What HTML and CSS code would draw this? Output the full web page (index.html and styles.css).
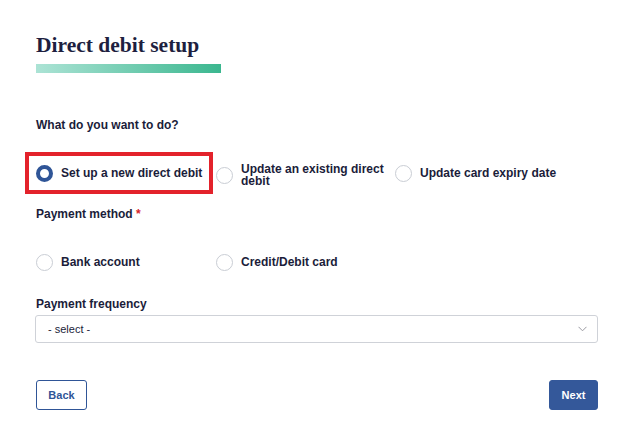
FILE: index.html
```html
<!DOCTYPE html>
<html lang="en">
<head>
<meta charset="utf-8">
<title>Direct debit setup</title>
<link rel="stylesheet" href="styles.css">
</head>
<body>
<main class="page">
  <h1 class="title">Direct debit setup</h1>
  <div class="title-bar"></div>

  <p class="label label-question">What do you want to do?</p>
  <div class="options options-action">
    <label class="option option-highlight">
      <span class="radio radio-checked"></span>
      <span class="option-text">Set up a new direct debit</span>
    </label>
    <label class="option">
      <span class="radio"></span>
      <span class="option-text">Update an existing direct debit</span>
    </label>
    <label class="option">
      <span class="radio"></span>
      <span class="option-text">Update card expiry date</span>
    </label>
  </div>

  <p class="label label-method">Payment method <span class="required">*</span></p>
  <div class="options options-method">
    <label class="option">
      <span class="radio"></span>
      <span class="option-text">Bank account</span>
    </label>
    <label class="option">
      <span class="radio"></span>
      <span class="option-text">Credit/Debit card</span>
    </label>
  </div>

  <p class="label label-frequency">Payment frequency</p>
  <div class="select">
    <span class="select-value">- select -</span>
    <svg class="chevron" width="9" height="6" viewBox="0 0 9 6"><path d="M0.5 0.8 L4.5 4.8 L8.5 0.8" fill="none" stroke="#9a9aa2" stroke-width="1"/></svg>
  </div>

  <div class="actions">
    <button class="btn btn-back">Back</button>
    <button class="btn btn-next">Next</button>
  </div>
</main>
</body>
</html>
```
FILE: styles.css
```css
* { box-sizing: border-box; }

html, body {
  margin: 0;
  padding: 0;
  background: #ffffff;
}

body {
  font-family: "Liberation Sans", Arial, sans-serif;
  color: #1b1d3a;
}

.page {
  width: 631px;
  padding: 33px 33px 0 36px;
}

.title {
  margin: 0;
  font-family: "Liberation Serif", Georgia, serif;
  font-weight: 700;
  font-size: 21.5px;
  line-height: 25px;
  color: #1e1f40;
}

.title-bar {
  margin-top: 6px;
  width: 185px;
  height: 9px;
  background: linear-gradient(90deg, #ace3d5 0%, #3bb78f 100%);
}

.label {
  margin: 0;
  font-size: 12px;
  font-weight: 700;
  line-height: 16px;
  color: #1b1d3a;
}

.label-question { margin-top: 44px; }
.label-method { margin-top: 19px; }
.label-frequency { margin-top: 24px; }

.required { color: #d8232a; }

.options {
  display: grid;
  grid-template-columns: 180px 179px 1fr;
  align-items: start;
  justify-items: start;
}

.options-action { margin-top: 30px; }
.options-method { margin-top: 30px; }

.option {
  display: flex;
  align-items: center;
  gap: 8px;
  min-height: 20px;
  padding-right: 4px;
  cursor: pointer;
}

.option-text {
  font-size: 12px;
  font-weight: 700;
  line-height: 12px;
  color: #1b1d3a;
}

.option-highlight {
  padding-right: 0;
  outline: 4px solid #e3222b;
  outline-offset: 7px;
}

.radio {
  flex: 0 0 auto;
  width: 17px;
  height: 17px;
  border-radius: 50%;
  border: 1px solid #c9cdd4;
  background: #fff;
}

.radio-checked {
  border: 4px solid #2f5597;
}

.select {
  margin-top: 3px;
  margin-left: -1px;
  width: 563px;
  height: 28px;
  border: 1px solid #cfd2d8;
  border-radius: 3px;
  display: flex;
  align-items: center;
  justify-content: space-between;
  padding: 0 10px 0 12px;
}

.select-value {
  font-size: 11px;
  color: #1b1d3a;
}

.chevron { display: block; }

.actions {
  margin-top: 37px;
  display: flex;
  justify-content: space-between;
}

.btn {
  height: 30px;
  border-radius: 3px;
  font-family: "Liberation Sans", Arial, sans-serif;
  font-size: 11px;
  font-weight: 700;
  padding: 0;
  cursor: pointer;
}

.btn-back {
  width: 51px;
  background: #fff;
  border: 1px solid #2f5597;
  color: #2f5597;
}

.btn-next {
  width: 49px;
  background: #34589a;
  border: 1px solid #34589a;
  color: #fff;
}
```
